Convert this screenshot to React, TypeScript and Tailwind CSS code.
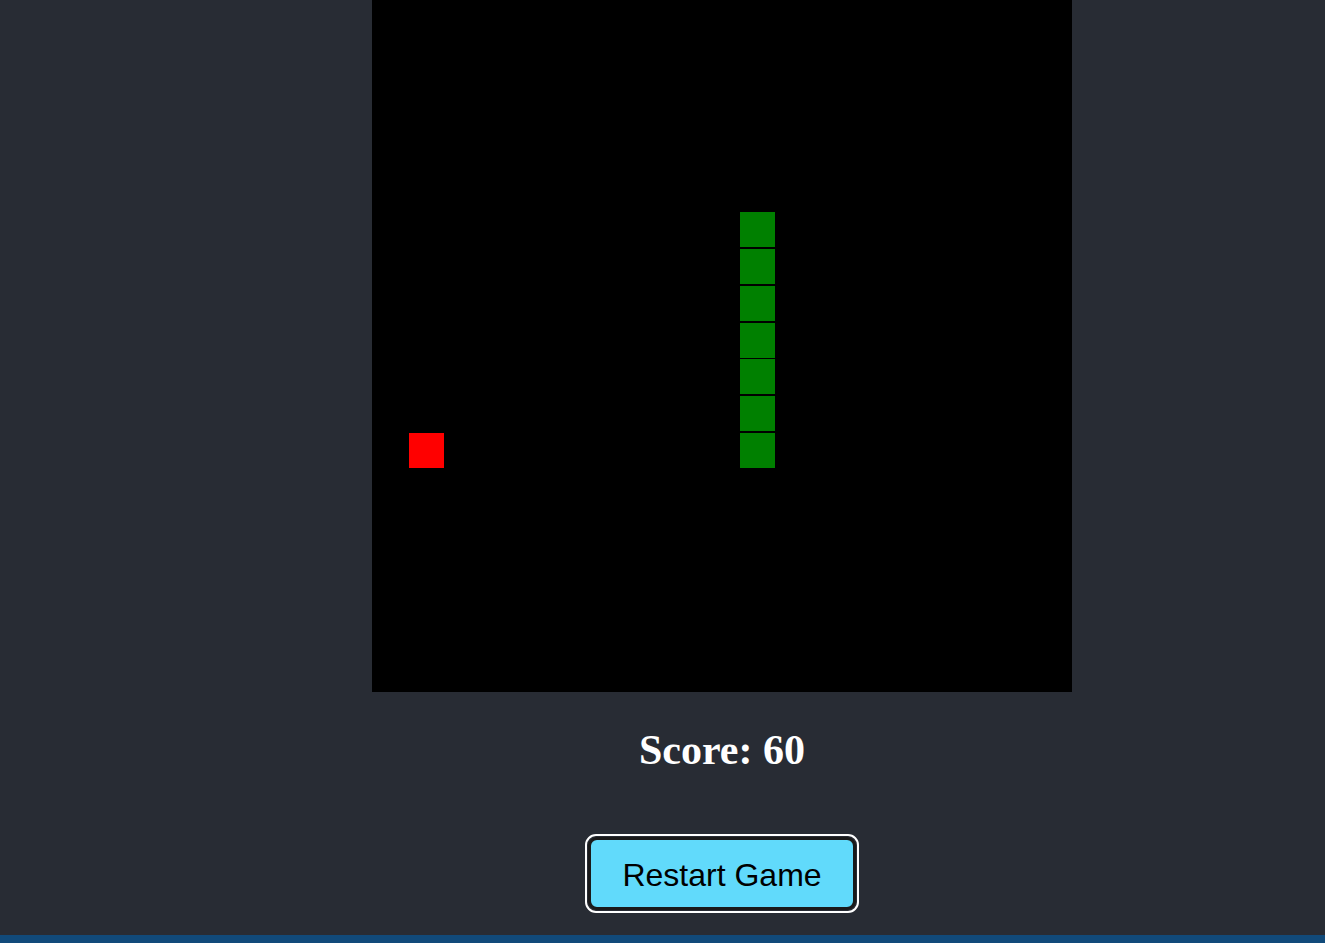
import React from "react";

const snakeY = [212, 249, 286, 323, 359, 396, 433];

export default function App() {
  return (
    <div className="w-[1325px] h-[943px] bg-[#282c34] flex flex-col overflow-hidden">
      <div className="flex-1 flex flex-col items-center pl-[119px]">
        <div className="relative w-[700px] h-[692px] bg-black">
          {snakeY.map((y, i) => (
            <div
              key={i}
              className="absolute w-[35px] h-[35px] bg-[#008000]"
              style={{ left: 368, top: y }}
            />
          ))}
          <div className="absolute left-[37px] top-[433px] w-[35px] h-[35px] bg-[#ff0000]" />
        </div>
        <h2 className="mt-[33px] text-white font-bold text-[42px] leading-[50px] font-['Liberation_Serif',serif]">
          Score: 60
        </h2>
        <button className="mt-[59px] w-[274px] h-[79px] rounded-[11px] border-2 border-white p-[1px] bg-[#282c34]">
          <div className="w-full h-full rounded-[9px] border-[3px] border-[#1a1a1a] bg-[#61dafb] flex items-center justify-center pt-[3px] text-black text-[32px] font-['Liberation_Sans',Arial,sans-serif]">
            Restart Game
          </div>
        </button>
      </div>
      <div className="h-[8px] bg-[#114a7a]" />
    </div>
  );
}
